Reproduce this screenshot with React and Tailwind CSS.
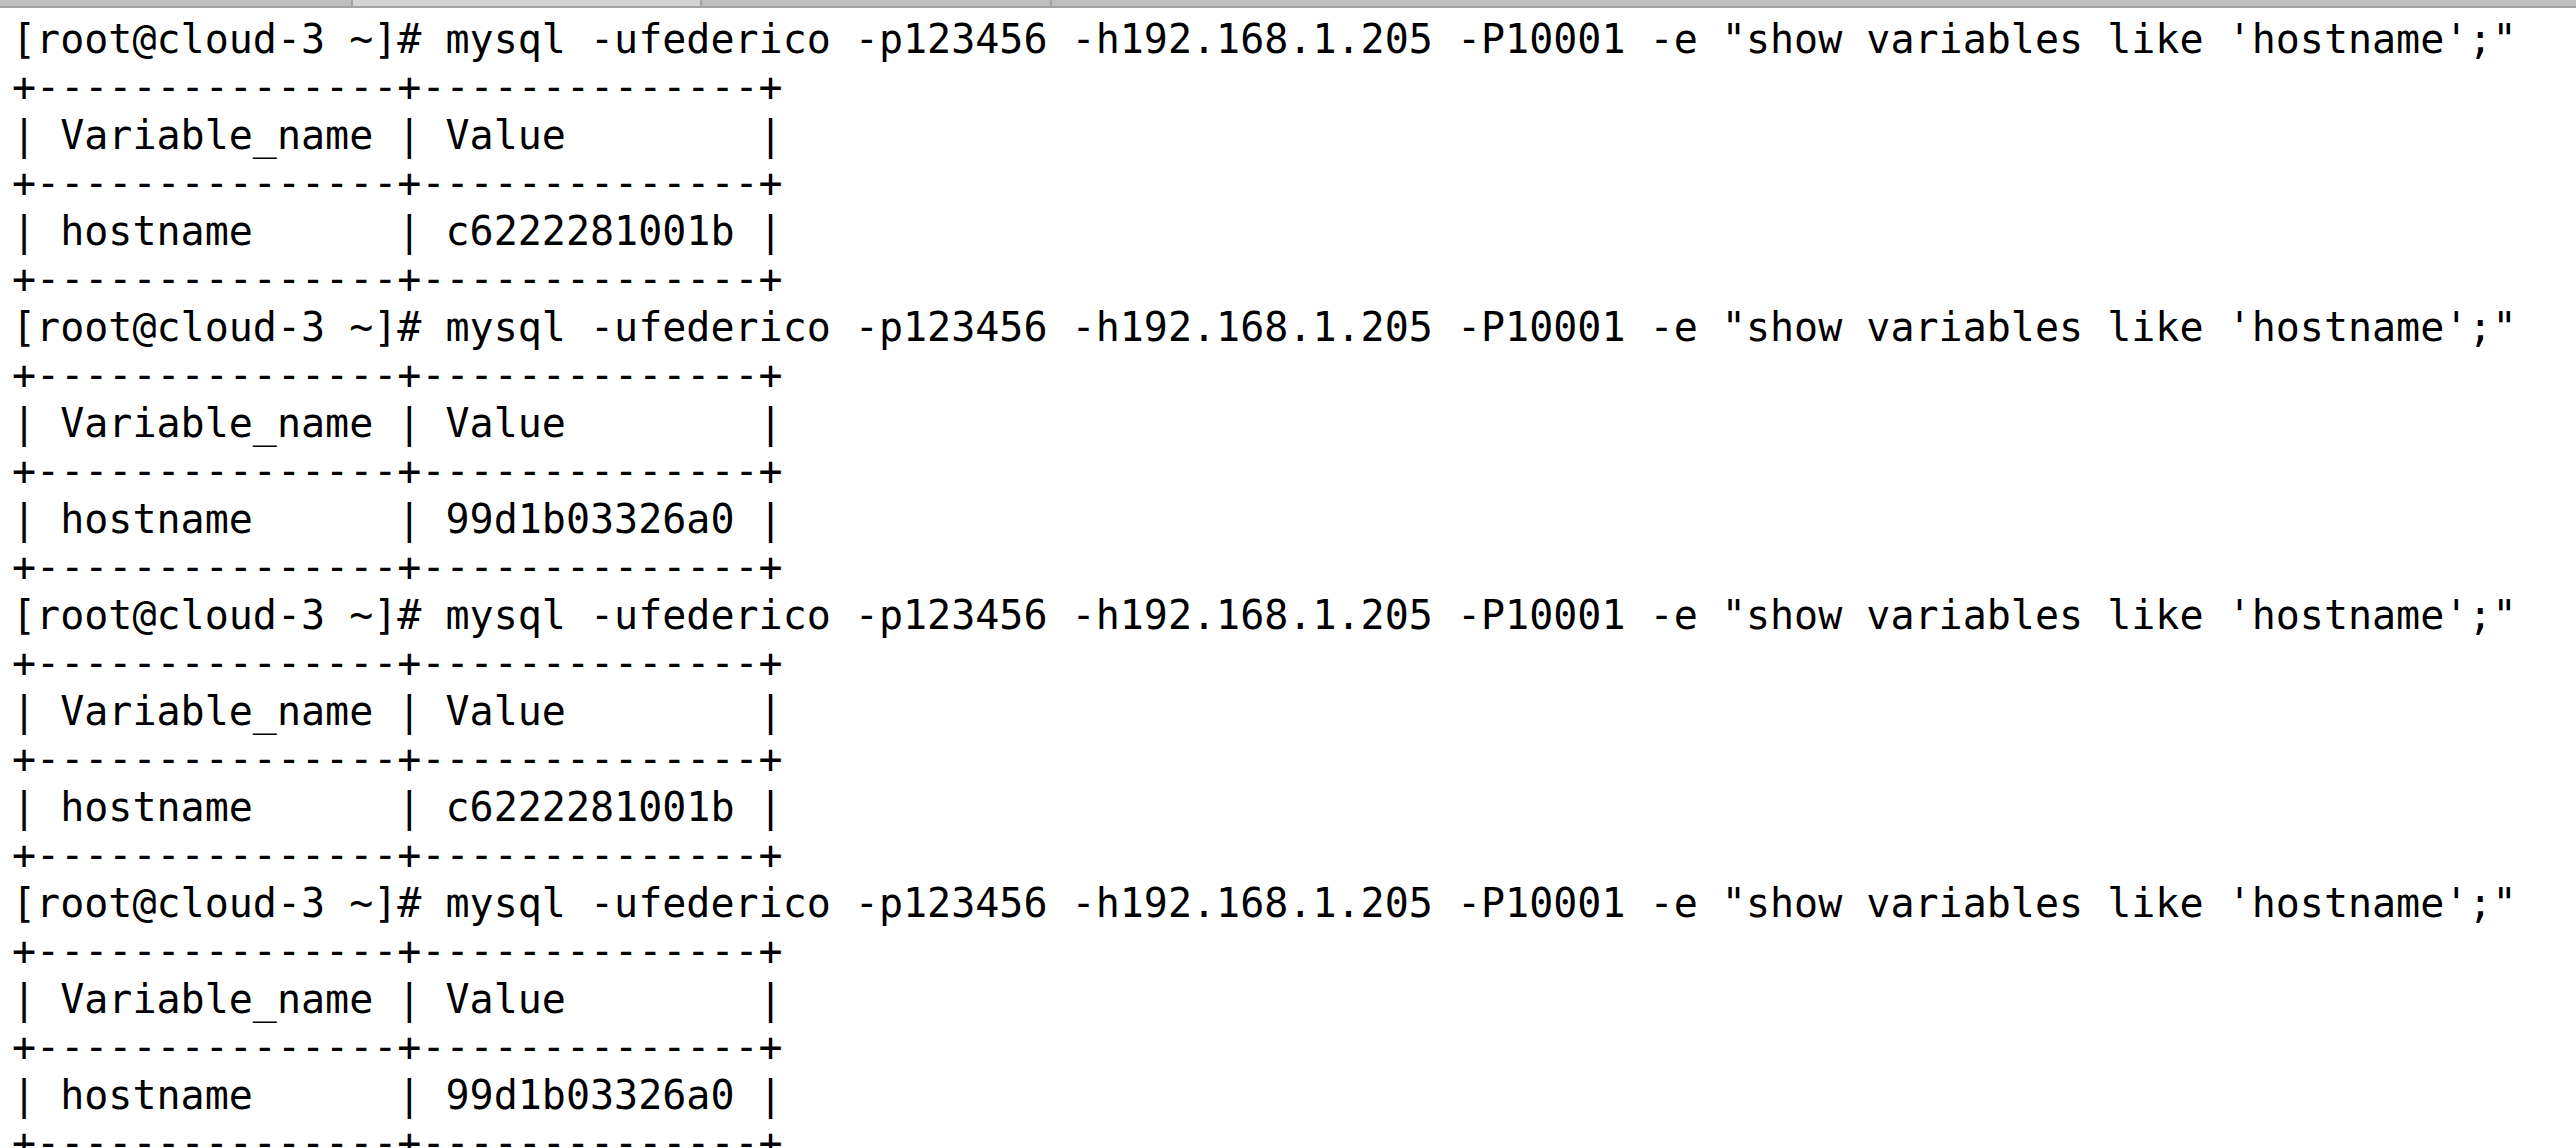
import React from 'react';

const command = `[root@cloud-3 ~]# mysql -ufederico -p123456 -h192.168.1.205 -P10001 -e "show variables like 'hostname';"`;
const border = '+---------------+--------------+';

const results = ['c6222281001b', '99d1b03326a0', 'c6222281001b', '99d1b03326a0'];

const Block = ({ value }) => (
  <>
    <div>{command}</div>
    <div>{border}</div>
    <div>{'| Variable_name | Value        |'}</div>
    <div>{border}</div>
    <div>{`| hostname      | ${value} |`}</div>
    <div>{border}</div>
  </>
);

const App = () => {
  return (
    <div className="h-[1148px] w-[2576px] overflow-hidden bg-white">
      {/* tab strip */}
      <div className="flex h-[8px] border-b-2 border-[#a3a3a3] bg-[#bebebe]">
        <div className="w-[351px]" />
        <div className="w-[2px] bg-[#a3a3a3]" />
        <div className="w-[347px] bg-[#d4d4d4]" />
        <div className="w-[2px] bg-[#a3a3a3]" />
        <div className="w-[348px]" />
        <div className="w-[2px] bg-[#a3a3a3]" />
        <div className="flex-1" />
      </div>

      {/* terminal output */}
      <div className="whitespace-pre pl-[12px] pt-[7px] font-['DejaVu_Sans_Mono',monospace] text-[40px] leading-[48px] text-black">
        {results.map((value, i) => (
          <Block key={i} value={value} />
        ))}
      </div>
    </div>
  );
};

export default App;
